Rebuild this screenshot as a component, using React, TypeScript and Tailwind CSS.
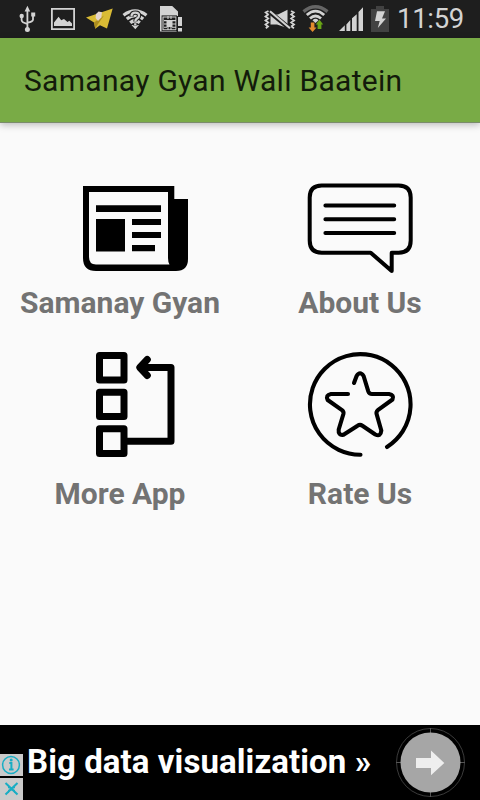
import type { ReactNode } from 'react';

function StatusBar() {
  return (
    <div className="flex h-[38px] shrink-0 bg-[#1e1e1e] text-[#d3d3d3]">
      <svg width="240" height="38" viewBox="0 0 240 38" fill="none" aria-label="Notifications">
        <g stroke="currentColor" strokeWidth="1.8">
          <path d="M27.4 10V29M21.6 17V20.2Q22 22.7 27 23.8M33 16V19.8Q32.5 22 27.8 22.7" />
        </g>
        <path fill="currentColor" d="M27.4 5.7 30.2 11.4H24.6ZM31.2 12.5h4v4h-4z" />
        <circle cx="21.7" cy="16" r="2.2" fill="currentColor" />
        <circle cx="27.4" cy="29.6" r="2.5" fill="currentColor" />
        <path fill="currentColor" fillRule="evenodd" d="M51 8H75V30H51ZM52.8 9.8V28.2H73.2V9.8Z" />
        <path fill="currentColor" d="M54 22.5 58.6 16.8 61.2 20.2 64 18.9 67.5 22 69.3 20.8 72 23.4V26H54Z" />
        <path fill="#d9bb35" d="M86 17.5 112.7 8.5 107 28.5 100 25.3 95.2 28.7 94 22.4Z" />
        <path fill="#ac8d1f" d="M94 22.4 104 15.5 98 24 95.2 28.7Z" />
        <path fill="#e4d5ce" d="M96 14 98.6 11.4 102 12.2 101.3 17.5 98 21 95.6 18Z" />
        <g stroke="currentColor" strokeWidth="3.2">
          <path d="M123.5 15.2Q135 6.6 146.5 15.2M126.8 19Q135 12.2 143.2 19M130.2 22.8Q135 18.7 139.8 22.8" />
        </g>
        <path fill="currentColor" d="M131.5 25 135.3 29.3 139 25Z" />
        <path d="M131.5 16.7V15Q131.8 12.6 135.4 12.6T139 15.8Q139 17.6 136.5 19Q135.3 19.8 135.3 21.6M135.3 23.2V25.4" stroke="#1e1e1e" strokeWidth="4.2" />
        <path d="M131.5 16.4Q131.5 12.7 135.3 12.7T139 15.7Q139 17.3 136.7 18.7Q135.3 19.6 135.3 21.6M135.3 23.2V25.3" stroke="currentColor" strokeWidth="2.3" />
        <path fill="currentColor" d="M160 6H172.2L178 11.6V16.3H181.8V28.7H177V31.5H160Z" />
        <path fill="#1e1e1e" d="M161.6 15.4H177V31H161.6Z" />
        <g stroke="currentColor" strokeWidth="1.1">
          <path d="M163 16.5V29.8H176M163 17H176V29.8M164 20.6H167M164 24H167M164 27.3H167M172 20.6H175.6M172 24H175.6M172 27.3H175.6M168 16V19M171 16V19M168 27V30M171 27V30" />
        </g>
        <path fill="currentColor" d="M166.5 20H172.5V27H166.5Z" />
        <path fill="#1e1e1e" d="M176.6 16H183V32H176.6Z" />
        <path fill="currentColor" d="M178 17H182V26H178ZM178 28H182V31.5H178Z" />
      </svg>
      <svg width="157" height="38" viewBox="240 0 157 38" fill="none" aria-label="System status">
        <g stroke="currentColor" strokeWidth="1.8">
          <path d="M268.5 11 265.7 12.5 268.2 14.5 265.5 16.5 268.2 18.5 265.5 20.5 268.2 22.5 265.5 24.5 268 26.5 265.8 28.3M291 11 293.7 12.5 291.2 14.5 294 16.5 291.2 18.5 294 20.5 291.2 22.5 294 24.5 291.3 26.5 294 28.3" />
        </g>
        <path fill="currentColor" d="M270.5 14.5H278L287.5 9.7V28L277 24.5H270.5Z" />
        <path d="M270 12.3 290 28.7" stroke="#1e1e1e" strokeWidth="4.6" />
        <path d="M270 11.3 290 28.3" stroke="currentColor" strokeWidth="2.1" />
        <path d="M303.5 11.6Q315.5 1.8 327.5 11.6" stroke="#666" strokeWidth="3.3" />
        <path d="M306.8 15Q315.5 7.2 324.2 15M310 18.5Q315.5 13.6 321 18.5" stroke="currentColor" strokeWidth="2.8" />
        <path fill="currentColor" d="M312.5 20.2Q315.5 17.5 318.5 20.2L315.5 23Z" />
        <path fill="#e38b2d" d="M310.8 22.5H314.4V27.4H316.5L312.6 32 308.6 27.4H310.8Z" />
        <path fill="#69a515" d="M317.6 29H321.4V24.4H323.2L319.5 19.7 315.7 24.4H317.6Z" />
        <path fill="currentColor" d="M339 31 344.8 25.3V31ZM346.4 24.5 350.3 20V31H346.4ZM352 18.3 356.7 14.2V31H352ZM358.5 12 363 7.2V31H358.5Z" />
        <path fill="#424242" d="M371 9H376V6H384V9H389V32H371Z" />
        <path fill="currentColor" d="M377 11.2H385L382 18.5H386L377.8 28 379.7 21H375Z" />
      </svg>
      <time className="whitespace-nowrap font-[Roboto,sans-serif] text-[27.5px] leading-[38px] tracking-[-0.3px]">11:59</time>
    </div>
  );
}

function NewsIcon() {
  return (
    <svg width="106" height="86" viewBox="83 186 106 86" aria-hidden="true">
      <path fillRule="evenodd" d="M83 186H174.3V199H188V259Q188 271 176 271H96Q83 271 83 258ZM89 192V257Q89 264.5 96 264.5H169.5Q168 262 168 258V192Z" />
      <path d="M96 205.3H161V212H96ZM96 219H125V251.5H96ZM132 219H161V225H132ZM132 232H161V238H132ZM132 245H155V251.3H132Z" />
    </svg>
  );
}

function AboutIcon() {
  return (
    <svg width="106" height="91" viewBox="307.3 183 106 91" fill="none" stroke="#000" strokeWidth="4" strokeLinecap="round" strokeLinejoin="round" aria-hidden="true">
      <path d="M322 185.5H399Q411 185.5 411 197.5V240.5Q411 252.7 399 252.7H392V271L371 252.7H322Q310 252.7 310 240.5V197.5Q310 185.5 322 185.5ZM325.7 205.5H394.5M325.7 219.2H394.5M325.7 232.9H394.5" />
    </svg>
  );
}

function AppsIcon() {
  return (
    <svg width="80" height="106" viewBox="95 352 80 106" fill="none" stroke="#000" strokeWidth="7" strokeLinejoin="round" aria-hidden="true">
      <path d="M99.5 355.5H124V380H99.5ZM99.5 392.2H124V416.5H99.5ZM99.5 428.8H124V453.5H99.5ZM127 441.2H171V367.5H142" />
      <path fill="#000" strokeLinecap="round" d="M147.3 359.5 139.8 367.5 147.3 375.5" />
    </svg>
  );
}

function RateIcon() {
  return (
    <svg width="106" height="106" viewBox="307 352 106 106" fill="none" stroke="#000" strokeWidth="4.1" strokeLinecap="round" strokeLinejoin="round" aria-hidden="true">
      <path d="M360.5 454.7A50.3 50.3 0 1 1 387 447" />
      <path d="M354 383 356.6 376Q360 370.5 363.6 376L368.3 391.3Q369.2 394 372 394H389Q394.5 395 392.5 399.5L377.8 410.2Q376 411.8 376.6 414L381.3 430.5Q380.7 437.2 375.3 434.5L362.4 425.7Q360 424 357.6 425.7L343.5 434.7Q338 435.7 338.7 429.5L343.4 414Q344 411.8 342 410.2L327.7 400Q325.3 395.2 331 394H348" />
    </svg>
  );
}

function MenuItem({ children, label, className, textClass }: { children: ReactNode; label: string; className: string; textClass: string }) {
  return (
    <button type="button" className={`flex flex-col items-center ${className}`}>
      {children}
      <span className={`whitespace-nowrap text-[30px] leading-9 font-bold text-[#737373] ${textClass}`}>{label}</span>
    </button>
  );
}

function AdBanner() {
  return (
    <footer className="flex h-[75px] shrink-0 bg-black text-white">
      <div className="flex w-[23px] flex-col justify-end gap-0.5">
        <svg width="23" height="22" viewBox="0 0 23 22" fill="none" stroke="#18adc4" aria-label="Ad information">
          <path fill="#cacaca" stroke="none" d="M0 0H23V22H0Z" />
          <circle cx="11" cy="11" r="8.4" strokeWidth="1.5" />
          <path d="M9.3 9H11.4V15M9 15.5H13.6" strokeWidth="2" />
          <circle cx="11.2" cy="5.9" r="1.5" fill="#18adc4" stroke="none" />
        </svg>
        <svg width="23" height="22" viewBox="0 0 23 22" fill="none" stroke="#18adc4" aria-label="Close ad">
          <path fill="#cacaca" stroke="none" d="M0 0H23V22H0Z" />
          <path d="M5.5 5 17.5 16.5M17.5 5 5.5 16.5" strokeWidth="2" />
          <path d="M8.5 7V10H14.5V7M8.5 15V12H14.5V15" />
        </svg>
      </div>
      <p className="w-[371px] whitespace-nowrap pl-1 pt-[18px] text-[33px] leading-[38px] font-bold tracking-[0.08px]">Big data visualization »</p>
      <svg className="mt-0.5" width="74" height="72" viewBox="394 727 74 72" fill="none" aria-label="Open advertisement">
        <circle cx="430.5" cy="762.5" r="34" stroke="#555" strokeWidth=".7" />
        <path d="M430.5 728V734M430.5 791V797M396 762.5H402M459 762.5H465" stroke="#555" />
        <circle cx="430.5" cy="762.5" r="30" fill="#a6a6a6" />
        <path fill="#eee" d="M416 758H431V750.5L444.3 763 431 775.3V768H416Z" />
      </svg>
    </footer>
  );
}

export default function App() {
  return (
    <div className="flex h-[800px] w-[480px] flex-col overflow-hidden bg-[#fafafa] font-[Roboto,sans-serif]">
      <StatusBar />
      <header className="z-10 h-[85px] shrink-0 border-b border-[#7a8c6b] bg-[#79ab46] pl-6 pt-[25px] shadow-[0_2px_7px_rgba(0,0,0,0.25)]">
        <h1 className="whitespace-nowrap text-[30px] leading-9 tracking-[0.29px] text-[#131b0b]">Samanay Gyan Wali Baatein</h1>
      </header>
      <main className="grid flex-1 grid-cols-2 grid-rows-[169px_191px] content-start pt-[60px]">
        <MenuItem label="Samanay Gyan" className="pt-[3px]" textClass="mt-[13px]"><div className="translate-x-4"><NewsIcon /></div></MenuItem>
        <MenuItem label="About Us" className="" textClass="mt-[11px]"><AboutIcon /></MenuItem>
        <MenuItem label="More App" className="" textClass="mt-[18px]"><div className="translate-x-[15px]"><AppsIcon /></div></MenuItem>
        <MenuItem label="Rate Us" className="" textClass="mt-[18px]"><RateIcon /></MenuItem>
      </main>
      <AdBanner />
    </div>
  );
}
